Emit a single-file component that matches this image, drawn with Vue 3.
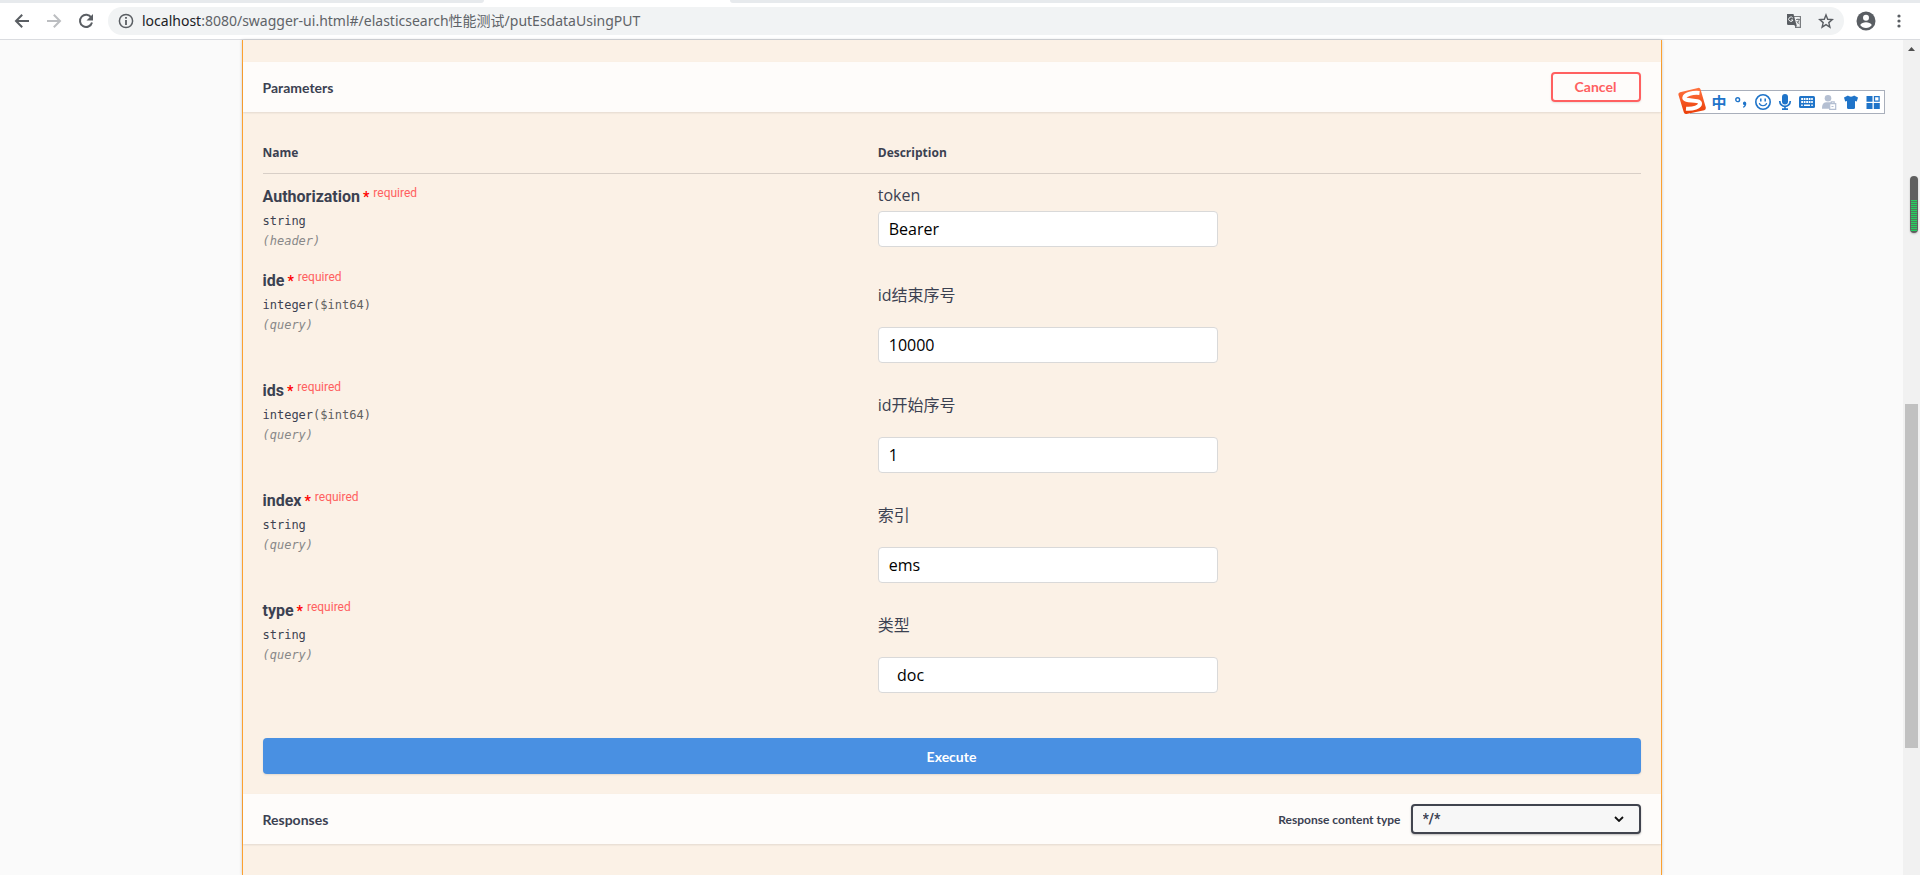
<script setup>
import { ref } from 'vue'

const params = ref([
  { name: 'Authorization', type: 'string', format: '', place: 'header', text: 'token', value: 'Bearer', block: false },
  { name: 'ide', type: 'integer', format: '($int64)', place: 'query', text: 'id结束序号', value: '10000', block: true },
  { name: 'ids', type: 'integer', format: '($int64)', place: 'query', text: 'id开始序号', value: '1', block: true },
  { name: 'index', type: 'string', format: '', place: 'query', text: '索引', value: 'ems', block: true },
  { name: 'type', type: 'string', format: '', place: 'query', text: '类型', value: '\u00a0 doc', block: true }
])
const contentType = ref('*/*')
</script>

<template>
  <div class="window">
    <div class="tabs">
      <div class="tabs-left"></div>
      <div class="tabs-right"></div>
    </div>
    <header class="toolbar">
      <nav class="nav">
        <button type="button" aria-label="Back">
          <svg width="16" height="16" viewBox="0 0 16 16"><path d="M15 8H2.5M8.2 1.8 2 8l6.2 6.2" fill="none" stroke="#5a5e63" stroke-width="2" /></svg>
        </button>
        <button type="button" aria-label="Forward" disabled>
          <svg width="16" height="16" viewBox="0 0 16 16"><path d="M1 8h12.500M7.800 1.800 14 8l-6.200 6.200" fill="none" stroke="#bcbec1" stroke-width="2" /></svg>
        </button>
        <button type="button" aria-label="Reload">
          <svg width="16" height="16" viewBox="0 0 16 16"><path d="M13.300 4.700A6.100 6.100 0 1 0 14 9.500" fill="none" stroke="#5a5e63" stroke-width="2" /><path d="M15 1v6.500H8.500z" fill="#5a5e63" /></svg>
        </button>
      </nav>
      <div class="omnibox">
        <button type="button" aria-label="Site information">
          <svg width="16" height="16" viewBox="0 0 16 16"><circle cx="8" cy="8" r="6.600" fill="none" stroke="#5a5e63" stroke-width="1.500" /><path d="M8 7v5M8 4v1.800" stroke="#5a5e63" stroke-width="1.800" /></svg>
        </button>
        <div class="url"><span class="host">localhost</span>:8080/swagger-ui.html#/elasticsearch性能测试/putEsdataUsingPUT</div>
        <button type="button" aria-label="Translate">
          <svg width="16" height="16" viewBox="0 0 16 16">
            <path d="M7 3.500h7.400v10.900H9" fill="none" stroke="#7a7d80" stroke-width="1.200" />
            <path d="M1 1h6.500l3 11H2.200A1.200 1.200 0 0 1 1 10.800z" fill="#5a5e63" />
            <path d="m8.200 12 1.800 2.800.8-2.800z" fill="#5a5e63" />
            <path d="M6.800 5A2.200 2.200 0 1 0 7 7H5" fill="none" stroke="#f1f3f4" stroke-width="1" />
            <path d="M10 6.500h4M12 5.500v1M13.200 6.500c-.5 2-1.400 3.200-2.400 4M10.800 8c.6 1.400 1.500 2.200 2.600 3" fill="none" stroke="#7a7d80" stroke-width="1" />
          </svg>
        </button>
        <button type="button" aria-label="Bookmark">
          <svg width="16" height="16" viewBox="0 0 16 16"><path d="m8 2 1.700 4.300 4.600.3-3.500 3 1.100 4.500L8 11.600l-3.900 2.500 1.100-4.500-3.500-3 4.600-.3z" fill="none" stroke="#5a5e63" stroke-width="1.400" /></svg>
        </button>
      </div>
      <button class="profile" type="button" aria-label="Profile">
        <svg width="20" height="20" viewBox="0 0 20 20"><circle cx="10" cy="10" r="9.500" fill="#5a5e63" /><circle cx="10" cy="6.800" r="3" fill="#fff" /><path d="M4.200 14c1-1.900 3.300-2.800 5.800-2.800s4.800.9 5.800 2.800c-1.300 1.900-3.400 3-5.800 3s-4.500-1.100-5.800-3z" fill="#fff" /></svg>
      </button>
      <button class="menu" type="button" aria-label="Menu">
        <svg width="4" height="16" viewBox="0 0 4 16" fill="#5a5e63"><circle cx="2" cy="3" r="1.600" /><circle cx="2" cy="8" r="1.600" /><circle cx="2" cy="13" r="1.600" /></svg>
      </button>
    </header>

    <div class="viewport">
      <div class="page">
        <main class="opblock">
          <section>
            <div class="section-header">
              <h4>Parameters</h4>
              <button class="cancel" type="button">Cancel</button>
            </div>
            <div class="table-wrap">
              <table>
                <thead>
                  <tr><th class="col-name">Name</th><th>Description</th></tr>
                </thead>
                <tbody>
                  <tr v-for="p in params" :key="p.name">
                    <td>
                      <label class="name" :for="'param-' + p.name">{{ p.name }}<span class="star">*</span><span class="required">required</span></label>
                      <div class="type">{{ p.type }}<span class="format">{{ p.format }}</span></div>
                      <div class="place">({{ p.place }})</div>
                    </td>
                    <td>
                      <p class="text" :class="{ block: p.block }">{{ p.text }}</p>
                      <input :id="'param-' + p.name" v-model="p.value" type="text">
                    </td>
                  </tr>
                </tbody>
              </table>
            </div>
            <div class="execute-wrap">
              <button class="execute" type="button">Execute</button>
            </div>
          </section>
          <section>
            <div class="section-header">
              <h4>Responses</h4>
              <label for="content-type">Response content type</label>
              <div class="select">
                <select id="content-type" v-model="contentType"><option>*/*</option></select>
                <svg width="10" height="6" viewBox="0 0 10 6"><path d="m1 1 4 4 4-4" fill="none" stroke="#111" stroke-width="1.800" /></svg>
              </div>
            </div>
          </section>
        </main>
      </div>
      <div class="scrollbar">
        <svg width="17" height="17" viewBox="0 0 17 17"><path d="M8.500 7 12 11H5z" fill="#505050" /></svg>
        <div class="before"></div>
        <div class="thumb"></div>
        <div class="after"></div>
      </div>
    </div>

    <div class="meter"><div class="level"></div></div>

    <div class="ime">
      <svg class="ime-logo" width="30" height="30" viewBox="0 0 30 30">
        <defs><linearGradient id="ime-red" x1="0" y1="0" x2="0" y2="1"><stop offset="0" stop-color="#ff7340" /><stop offset="1" stop-color="#ea3d08" /></linearGradient></defs>
        <path d="M3 5.200 21 .9q2-.4 2.600 1.500l5.200 18.200q.4 2-1.600 2.600L9.500 27q-2.200.4-2.700-1.700L1.400 7.800Q1 5.800 3 5.200z" fill="url(#ime-red)" />
        <path d="M22.500 6C16 5.300 7.800 7.200 7.300 10.800c-.4 3.900 15.200 1.500 15.700 5.500.3 3.500-7 6-14 5.400" fill="none" stroke="#fff" stroke-width="4" />
      </svg>
      <button class="zh" type="button">中</button>
      <button type="button" aria-label="Punctuation">
        <svg width="16" height="16" viewBox="0 0 16 16"><circle cx="4.700" cy="5.700" r="1.900" fill="none" stroke="#1f74c9" stroke-width="1.400" /><path d="M11.300 7.500a2 2 0 0 1 2 2c0 2.200-1.200 3.700-3 4.200l-.4-1c1-.4 1.500-.9 1.600-1.500a1.900 1.900 0 0 1-.2-3.700z" fill="#1f74c9" /></svg>
      </button>
      <button type="button" aria-label="Emoji">
        <svg width="16" height="16" viewBox="0 0 16 16" fill="none" stroke="#1f74c9"><circle cx="8" cy="8" r="7.200" stroke-width="1.600" /><path d="M5.800 4.500v3M10.200 4.500v3" stroke-width="1.500" /><path d="M4.300 9.200c.8 3.400 6.600 3.400 7.400 0" stroke-width="1.200" /></svg>
      </button>
      <button type="button" aria-label="Voice">
        <svg width="16" height="16" viewBox="0 0 16 16"><rect x="5" width="6" height="10.500" rx="3" fill="#1f74c9" /><path d="M2.800 7v.5a5.200 4.800 0 0 0 10.400 0V7M8 12v3.200M5 15.200h6" fill="none" stroke="#1f74c9" stroke-width="1.700" /></svg>
      </button>
      <button type="button" aria-label="Keyboard">
        <svg width="16" height="16" viewBox="0 0 16 16"><rect y="2" width="16" height="12" rx="1.500" fill="#1f74c9" /><path d="M2.200 5h11.600M2.200 8h11.600" stroke="#fff" stroke-width="1.800" stroke-dasharray="1.800 .7" /><path d="M2.200 11.300h1.500M5 11.300h6M12.300 11.300h1.500" stroke="#fff" stroke-width="1.500" /></svg>
      </button>
      <button type="button" aria-label="Account">
        <svg width="16" height="16" viewBox="0 0 16 16"><circle cx="7" cy="4.300" r="3.300" fill="#b4bfd2" /><path d="M1 14c0-3.500 1.200-5.500 4-5.800h5v6.600H1z" fill="#b4bfd2" /><path d="M8.700 9.700h6v5.600h-6zM10.300 9.700V7.900h2.900v1.800" fill="#fff" stroke="#b4bfd2" stroke-width="1.200" /><path d="M10.500 12.500h2" stroke="#b4bfd2" /></svg>
      </button>
      <button type="button" aria-label="Skin">
        <svg width="16" height="16" viewBox="0 0 16 16"><path d="M5 1.500c1 1.500 5 1.500 6 0l4 2-1.200 4-1.800-.5V14q-.3 1-1.300 1H5.300Q4.200 15 4 14V7l-1.800.5L1 3.500z" fill="#1f74c9" /></svg>
      </button>
      <button type="button" aria-label="Toolbox">
        <svg width="16" height="16" viewBox="0 0 16 16"><path d="M1.500 2h6v5.800h-6zM1.500 9h6v6h-6zM8.800 9h6v6h-6z" fill="#1f74c9" /><path d="M9.500 2.700h4.600v4.400H9.500z" fill="none" stroke="#1f74c9" stroke-width="1.300" /></svg>
      </button>
    </div>
  </div>
</template>

<style>
body {
  margin: 0;
  overflow: hidden;
}
</style>

<style scoped>
* {
  box-sizing: border-box;
}
.window {
  --heading: Lato, sans-serif;
  position: relative;
  display: flex;
  flex-direction: column;
  height: 100vh;
  background: #fff;
  color: #3b4151;
  font-family: "Open Sans", "Noto Sans CJK SC", sans-serif;
}
button {
  padding: 0;
  border: 0;
  background: none;
  font-family: inherit;
}
svg {
  display: block;
}
.tabs {
  display: flex;
  justify-content: space-between;
  height: 3px;
}
.tabs-left {
  width: 25.2%;
  border-bottom-right-radius: 4px;
  background: #e7eaed;
}
.tabs-right {
  width: 62%;
  border-bottom-left-radius: 4px;
  background: #e7eaed;
}
.toolbar {
  display: flex;
  align-items: center;
  height: 37px;
  padding: 0 19px 1px 14px;
  border-bottom: 1px solid #dadce0;
}
.nav {
  display: flex;
  gap: 16px;
  margin-right: 14px;
}
.omnibox {
  display: flex;
  flex: 1;
  align-items: center;
  gap: 8px;
  height: 28px;
  padding: 0 10px;
  border-radius: 14px;
  background: #f1f3f4;
}
.omnibox button:last-child {
  margin-left: 8px;
}
.url {
  flex: 1;
  color: #5f6368;
  font-family: "Noto Sans", "Noto Sans CJK SC", sans-serif;
  font-size: 14px;
  line-height: 28px;
}
.host {
  color: #202124;
}
.profile {
  margin: 0 21px 0 12px;
}
.viewport {
  display: flex;
  flex: 1;
  min-height: 0;
}
.page {
  display: flex;
  flex: 1;
  justify-content: center;
  padding: 0 20px;
  background: #fafafa;
}
.opblock {
  flex: 1;
  max-width: 1420px;
  padding-top: 22px;
  border: solid #fca130;
  border-width: 0 1px;
  background: #fbf1e6;
  box-shadow: 0 0 3px rgba(0, 0, 0, 0.19);
}
.section-header {
  display: flex;
  align-items: center;
  min-height: 50px;
  padding: 8px 20px;
  background: rgba(255, 255, 255, 0.8);
  box-shadow: 0 1px 2px rgba(0, 0, 0, 0.1);
}
h4 {
  flex: 1;
  margin: 0;
  font-family: var(--heading);
  font-size: 14px;
  font-weight: 700;
}
.cancel {
  width: 90px;
  height: 30px;
  padding-bottom: 2px;
  border: 2px solid #ff6060;
  border-radius: 4px;
  box-shadow: 0 1px 2px rgba(0, 0, 0, 0.1);
  color: #ff6060;
  font-family: var(--heading);
  font-size: 14px;
  font-weight: 700;
}
.table-wrap {
  padding: 20px;
}
table {
  width: 100%;
  border-collapse: separate;
  border-spacing: 0;
  table-layout: fixed;
}
th {
  padding: 12px 0;
  border-bottom: 1px solid #d8cfc7;
  font-size: 12px;
  line-height: 17px;
  text-align: left;
}
.col-name {
  width: 44.65%;
}
td {
  padding: 10px 0 0;
  vertical-align: top;
}
.name {
  display: block;
  height: 26px;
  font-family: Roboto, sans-serif;
  font-size: 16px;
  font-weight: 700;
  line-height: 26px;
}
.star {
  margin: 0 4px 0 3px;
  color: #f00;
  font-size: 14px;
}
.required {
  color: #ff6060;
  font-size: 12px;
  font-weight: 400;
  line-height: 12px;
  vertical-align: 5px;
}
.type,
.place {
  font-family: "DejaVu Sans Mono", monospace;
  font-size: 12px;
  line-height: 20px;
}
.type {
  margin-top: 1px;
}
.format {
  color: #606060;
}
.place {
  margin-bottom: 7px;
  color: #888;
  font-style: italic;
}
.text {
  margin: 0 0 5px;
  font-size: 16px;
  line-height: 22px;
}
.text.block {
  margin: 16px 0 21px;
}
input {
  display: block;
  width: 100%;
  max-width: 340px;
  height: 36px;
  margin-bottom: 5px;
  padding: 0 10px;
  border: 1px solid #d9d9d9;
  border-radius: 4px;
  background: #fff;
  color: #000;
  font-family: inherit;
  font-size: 16px;
}
.execute-wrap {
  padding: 20px;
}
.execute {
  display: block;
  width: 100%;
  height: 36px;
  border-radius: 4px;
  background: #4990e2;
  box-shadow: 0 1px 2px rgba(0, 0, 0, 0.1);
  color: #fff;
  font-family: var(--heading);
  font-size: 14px;
  font-weight: 700;
}
.section-header label {
  margin-right: 10px;
  font-family: var(--heading);
  font-size: 12px;
  font-weight: 700;
}
.select {
  position: relative;
  width: 230px;
}
.select select {
  display: block;
  width: 100%;
  height: 30px;
  padding: 0 10px;
  border: 2px solid #41444e;
  border-radius: 4px;
  background: #f7f7f7;
  box-shadow: 0 1px 2px rgba(0, 0, 0, 0.25);
  color: #3b4151;
  appearance: none;
  font-family: Roboto, sans-serif;
  font-size: 14px;
  font-weight: 700;
}
.select svg {
  position: absolute;
  top: 12px;
  right: 17px;
  pointer-events: none;
}
.scrollbar {
  display: flex;
  flex-direction: column;
  width: 17px;
  background: #f1f1f1;
}
.before {
  flex: 347;
}
.thumb {
  flex: 344;
  margin: 0 2px;
  background: #c1c1c1;
}
.after {
  flex: 127;
}
.meter {
  position: absolute;
  top: 176px;
  right: 2px;
  display: flex;
  align-items: flex-end;
  width: 8px;
  height: 57px;
  padding: 0 1px 2px;
  border-radius: 4px;
  background: #5f5f5f;
  box-shadow: 0 1px 2px rgba(0, 0, 0, 0.2);
}
.level {
  width: 100%;
  height: 31px;
  background: repeating-linear-gradient(#23d160 0 1px, #4f7a5c 1px 2px);
}
.ime {
  position: absolute;
  top: 90px;
  right: 35px;
  display: flex;
  height: 24px;
  padding-left: 17px;
  border: 1px solid #a9afbb;
  background: #fff;
}
.ime-logo {
  position: absolute;
  top: -4px;
  left: -14px;
}
.ime button {
  display: flex;
  align-items: center;
  justify-content: center;
  width: 22px;
}
.ime .zh {
  color: #1f74c9;
  font-family: "Noto Sans CJK SC", sans-serif;
  font-size: 15px;
  font-weight: 700;
  line-height: 22px;
}
</style>
